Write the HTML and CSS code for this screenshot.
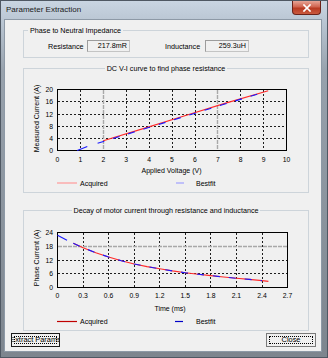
FILE: index.html
```html
<!DOCTYPE html>
<html>
<head>
<meta charset="utf-8">
<title>Parameter Extraction</title>
<link rel="stylesheet" href="styles.css">
</head>
<body>
<div class="window">
  <div class="titlebar">
    <span class="title">Parameter Extraction</span>
    <div class="close-x"><svg width="12" height="8" viewBox="0 0 12 8"><path d="M3 1 L9 7 M9 1 L3 7" stroke="#fff" stroke-width="1.7" stroke-linecap="square"/></svg></div>
  </div>
  <div class="client">
    <fieldset class="group g1">
      <legend class="gl left">Phase to Neutral Impedance</legend>
      <div class="row">
        <span class="lbl l1">Resistance</span>
        <span class="tb t1">217.8mR</span>
        <span class="lbl l2">Inductance</span>
        <span class="tb t2">259.3uH</span>
      </div>
    </fieldset>

    <fieldset class="group g2">
      <legend class="gl center">DC V-I curve to find phase resistance</legend>
      <svg class="plot" width="284" height="118" viewBox="0 0 284 118">
        <g class="grid-dark">
          <line x1="56.5" y1="16" x2="56.5" y2="76"/>
          <line x1="102.5" y1="16" x2="102.5" y2="76"/>
          <line x1="125.5" y1="16" x2="125.5" y2="76"/>
          <line x1="148.5" y1="16" x2="148.5" y2="76"/>
          <line x1="171.5" y1="16" x2="171.5" y2="76"/>
          <line x1="216.5" y1="16" x2="216.5" y2="76"/>
          <line x1="239.5" y1="16" x2="239.5" y2="76"/>
          <line x1="34" y1="27.5" x2="262" y2="27.5"/>
          <line x1="34" y1="40.5" x2="262" y2="40.5"/>
          <line x1="34" y1="52.5" x2="262" y2="52.5"/>
          <line x1="34" y1="64.5" x2="262" y2="64.5"/>
        </g>
        <g class="grid-light">
          <line x1="79.5" y1="16" x2="79.5" y2="76"/>
          <line x1="193.5" y1="16" x2="193.5" y2="76"/>
        </g>
        <rect class="frame" x="33.5" y="15.5" width="229" height="61"/>
        <polyline class="red" points="79.3,66.7 120,54.4 160,42.0 200,29.6 244.2,16.7"/>
        <polyline class="blue" points="53.2,76.5 63.3,72.4"/>
        <polyline class="blue dash" points="73.6,69.3 120,55.0 160,42.6 200,30.3 239.6,18.3"/>
        <g class="tk">
          <text x="29" y="18" text-anchor="end">20</text>
          <text x="29" y="30.2" text-anchor="end">16</text>
          <text x="29" y="42.9" text-anchor="end">12</text>
          <text x="29" y="54.6" text-anchor="end">8</text>
          <text x="29" y="66.8" text-anchor="end">4</text>
          <text x="29" y="79" text-anchor="end">0</text>
          <text x="33.5" y="87.5" text-anchor="middle">0</text>
          <text x="56.4" y="87.5" text-anchor="middle">1</text>
          <text x="79.3" y="87.5" text-anchor="middle">2</text>
          <text x="102.2" y="87.5" text-anchor="middle">3</text>
          <text x="125.1" y="87.5" text-anchor="middle">4</text>
          <text x="148" y="87.5" text-anchor="middle">5</text>
          <text x="170.9" y="87.5" text-anchor="middle">6</text>
          <text x="193.8" y="87.5" text-anchor="middle">7</text>
          <text x="216.7" y="87.5" text-anchor="middle">8</text>
          <text x="239.6" y="87.5" text-anchor="middle">9</text>
          <text x="262.5" y="87.5" text-anchor="middle">10</text>
        </g>
        <text class="ax" x="147.5" y="98.5" text-anchor="middle">Applied Voltage (V)</text>
        <text class="ax" transform="translate(14.5,44.5) rotate(-90)" text-anchor="middle">Measured Current (A)</text>
        <line class="lg-red1" x1="33" y1="109" x2="53" y2="109"/>
        <text class="lg" x="56" y="111.5">Acquired</text>
        <line class="lg-blue1" x1="152" y1="109" x2="160" y2="109"/>
        <text class="lg" x="172" y="111.5">Bestfit</text>
      </svg>
    </fieldset>

    <fieldset class="group g3">
      <legend class="gl center">Decay of motor current through resistance and inductance</legend>
      <svg class="plot" width="284" height="114" viewBox="0 0 284 114">
        <g class="grid-dark">
          <line x1="59.5" y1="17" x2="59.5" y2="71"/>
          <line x1="84.5" y1="17" x2="84.5" y2="71"/>
          <line x1="110.5" y1="17" x2="110.5" y2="71"/>
          <line x1="135.5" y1="17" x2="135.5" y2="71"/>
          <line x1="161.5" y1="17" x2="161.5" y2="71"/>
          <line x1="186.5" y1="17" x2="186.5" y2="71"/>
          <line x1="212.5" y1="17" x2="212.5" y2="71"/>
          <line x1="238.5" y1="17" x2="238.5" y2="71"/>
          <line x1="34" y1="44.5" x2="263" y2="44.5"/>
          <line x1="34" y1="57.5" x2="263" y2="57.5"/>
        </g>
        <g class="grid-light">
          <line x1="34" y1="30.5" x2="263" y2="30.5"/>
        </g>
        <rect class="frame" x="33.5" y="16.5" width="230" height="55"/>
        <polyline class="blue" points="33.5,19.2 43,24.2"/>
        <polyline class="red" points="49.3,27.3 59.1,31.7 71.8,36.7 84.6,41.0 97.4,44.8 110.2,48.0 123.0,50.6 135.7,52.8 148.5,54.9 161.3,56.7 174.1,58.2 186.8,59.6 199.6,61.0 212.4,62.3 225.2,63.4 238.0,64.6 244.4,65.4"/>
        <polyline class="blue dash" points="49.3,27.3 59.1,31.7 71.8,36.7 84.6,41.0 97.4,44.8 110.2,48.0 123.0,50.6 135.7,52.8 148.5,54.9 161.3,56.7 174.1,58.2 186.8,59.6 199.6,61.0 212.4,62.3 225.2,63.4 238.0,64.6"/>
        <g class="tk">
          <text x="29" y="19" text-anchor="end">24</text>
          <text x="29" y="32.75" text-anchor="end">18</text>
          <text x="29" y="46.5" text-anchor="end">12</text>
          <text x="29" y="60.25" text-anchor="end">6</text>
          <text x="29" y="74" text-anchor="end">0</text>
          <text x="33.5" y="82.2" text-anchor="middle">0</text>
          <text x="59.1" y="82.2" text-anchor="middle">0.3</text>
          <text x="84.6" y="82.2" text-anchor="middle">0.6</text>
          <text x="110.2" y="82.2" text-anchor="middle">0.9</text>
          <text x="135.7" y="82.2" text-anchor="middle">1.2</text>
          <text x="161.3" y="82.2" text-anchor="middle">1.5</text>
          <text x="186.9" y="82.2" text-anchor="middle">1.8</text>
          <text x="212.4" y="82.2" text-anchor="middle">2.1</text>
          <text x="238" y="82.2" text-anchor="middle">2.4</text>
          <text x="263.5" y="82.2" text-anchor="middle">2.7</text>
        </g>
        <text class="ax" x="146" y="94.5" text-anchor="middle">Time (ms)</text>
        <text class="ax" transform="translate(14.5,42) rotate(-90)" text-anchor="middle">Phase Current (A)</text>
        <line class="lg-red2" x1="33" y1="105.5" x2="53" y2="105.5"/>
        <text class="lg" x="56" y="108">Acquired</text>
        <line class="lg-blue2" x1="151" y1="105.5" x2="159" y2="105.5"/>
        <text class="lg" x="172" y="108">Bestfit</text>
      </svg>
    </fieldset>

    <div class="buttons">
      <button class="btn b-extract"><span class="btxt">Extract Params</span></button>
      <button class="btn b-close"><span class="btxt">Close</span></button>
    </div>
  </div>
</div>
</body>
</html>
```

FILE: styles.css
```css
* { box-sizing: border-box; }
html, body { margin: 0; padding: 0; }
body {
  width: 328px;
  height: 358px;
  overflow: hidden;
  background: #ffffff;
  font-family: "Liberation Sans", Arial, sans-serif;
}
.window {
  width: 328px;
  height: 358px;
  background: linear-gradient(#c9d5e2 0, #bac6d3 20px, #98a2ad 70px, #7d858e 100%);
  border: 1px solid #4f5863;
  display: flex;
  flex-direction: column;
}
.titlebar {
  height: 18px;
  display: flex;
  align-items: flex-start;
  justify-content: space-between;
}
.title {
  font-size: 8px;
  line-height: 18px;
  padding-left: 5px;
  color: #1a1a1a;
}
.close-x {
  width: 29px;
  height: 14px;
  margin-right: 6px;
  border: 1px solid #6b2219;
  border-top: none;
  border-radius: 0 0 4px 4px;
  background: linear-gradient(#e7a496, #d0644f 45%, #b83a22 55%, #c95a3f);
  display: flex;
  align-items: center;
  justify-content: center;
}
.client {
  margin: 0 5px 5px 3px;
  flex: 1;
  background: #f0f0f0;
  border: 1px solid #8d99a6;
  display: flex;
  flex-direction: column;
}
.group {
  margin: 0 0 0 18px;
  padding: 0;
  width: 286px;
  min-width: 0;
  border: 1px solid #cdd4da;
}
.g1 { margin-top: 5px; padding-bottom: 5px; }
.g2 { margin-top: 5px; }
.g3 { margin-top: 12px; }
.gl {
  font-size: 7.2px;
  line-height: 11px;
  padding: 0 2px;
  color: #000;
}
.gl.left { margin-left: 4px; }
.gl.center { margin-left: auto; margin-right: auto; }
.row {
  display: flex;
  align-items: center;
  height: 12px;
  margin-top: 4px;
  padding-left: 24px;
  font-size: 7.2px;
  color: #000;
}
.lbl { white-space: nowrap; }
.l1 { width: 39px; }
.l2 { width: 40px; margin-left: 35px; }
.tb {
  height: 12px;
  line-height: 10px;
  text-align: right;
  padding-right: 2px;
  background: #f0f0f0;
  border: 1px solid #c4c4c4;
  border-top-color: #9c9c9c;
  border-left-color: #9c9c9c;
}
.t1 { width: 43px; }
.t2 { width: 44px; }
.plot { display: block; }
.frame { fill: none; stroke: #000; stroke-width: 1; }
.grid-dark line { stroke: #1e1e1e; stroke-width: 1; stroke-dasharray: 2 2; }
.grid-light line { stroke: #a8a8a8; stroke-width: 1.4; stroke-dasharray: 4 1; }
.red { fill: none; stroke: #ff2a2a; stroke-width: 1.1; }
.blue { fill: none; stroke: #1a1aff; stroke-width: 1.1; }
.blue.dash { stroke-dasharray: 7 9; }
.tk text { font-size: 6.8px; fill: #000; }
.ax { font-size: 7px; fill: #000; }
.lg { font-size: 7px; fill: #000; }
.lg-red1 { stroke: #ff9a9a; stroke-width: 1.2; }
.lg-blue1 { stroke: #a0a0ff; stroke-width: 1.2; }
.lg-red2 { stroke: #c00000; stroke-width: 1.2; }
.lg-blue2 { stroke: #0000c8; stroke-width: 1.2; }
.buttons {
  display: flex;
  justify-content: space-between;
  margin-top: 2px;
  padding: 0 5px 0 6px;
}
.btn {
  position: relative;
  height: 14px;
  padding: 0;
  margin: 0;
  background: #f0f0f0;
  font-family: "Liberation Sans", Arial, sans-serif;
  font-size: 7.4px;
  color: #000;
  display: flex;
  align-items: center;
  justify-content: center;
  overflow: hidden;
  white-space: nowrap;
}
.btn::after {
  content: "";
  position: absolute;
  top: 2px; left: 2px; right: 2px; bottom: 2px;
  border: 1px dotted #000;
}
.b-extract { width: 49px; border: 1px solid #1a1a1a; }
.b-close { width: 50px; border: 1px solid #7a7a7a; }
.btxt { line-height: 8px; }
```
